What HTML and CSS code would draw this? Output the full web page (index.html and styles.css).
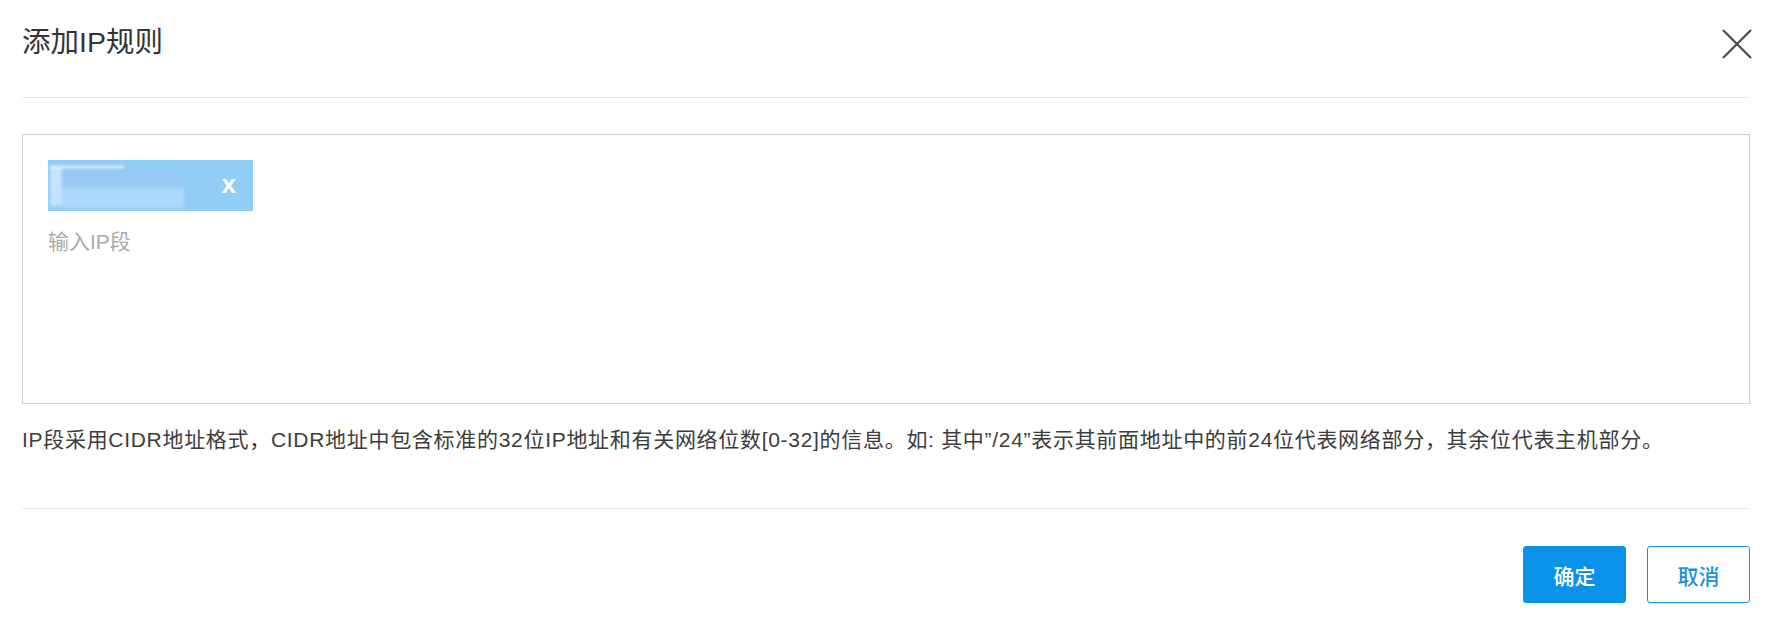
FILE: index.html
```html
<!DOCTYPE html>
<html lang="zh-CN">
<head>
<meta charset="utf-8">
<title>添加IP规则</title>
<link rel="stylesheet" href="styles.css">
</head>
<body>
<div class="dialog">
  <div class="dialog-header">
    <h1 class="dialog-title">添加IP规则</h1>
    <button class="close-btn" aria-label="关闭">
      <svg width="30" height="30" viewBox="0 0 30 30"><path d="M1 1 L29 29 M29 1 L1 29" stroke="#4a4a4a" stroke-width="2.2" fill="none"/></svg>
    </button>
  </div>
  <div class="dialog-body">
    <div class="ip-input">
      <div class="tag">
        <div class="tag-blur">
          <span class="blur-line"></span>
          <span class="blur-col"></span>
          <span class="blur-top"></span>
          <span class="blur-bottom"></span>
        </div>
        <span class="tag-x">x</span>
      </div>
      <div class="placeholder">输入IP段</div>
    </div>
    <p class="hint">IP段采用CIDR地址格式，CIDR地址中包含标准的32位IP地址和有关网络位数[0-32]的信息。如: 其中”/24”表示其前面地址中的前24位代表网络部分，其余位代表主机部分。</p>
  </div>
  <div class="dialog-footer">
    <button class="btn btn-primary">确定</button>
    <button class="btn btn-default">取消</button>
  </div>
</div>
</body>
</html>
```

FILE: styles.css
```css
* { box-sizing: border-box; }
html, body { margin: 0; padding: 0; background: #fff; }
body {
  font-family: "Liberation Sans", "Noto Sans CJK SC", sans-serif;
  color: #333;
}
.dialog {
  width: 1768px;
  padding: 0 18px 0 22px;
}
.dialog-header {
  height: 98px;
  border-bottom: 1px solid #e8e8e8;
  display: flex;
  align-items: flex-start;
  justify-content: space-between;
}
.dialog-title {
  margin: 0;
  padding-top: 22px;
  font-size: 28.5px;
  font-weight: normal;
  line-height: 40px;
  color: #333;
}
.close-btn {
  margin-top: 29px;
  margin-right: -2px;
  padding: 0;
  border: none;
  background: none;
  width: 30px;
  height: 30px;
  display: block;
}
.close-btn svg { display: block; }
.dialog-body {
  padding-top: 36px;
}
.ip-input {
  height: 270px;
  border: 1px solid #cfcfcf;
  padding: 25px 25px;
}
.tag {
  position: relative;
  width: 205px;
  height: 51px;
  background: #92cdf8;
  display: flex;
  align-items: center;
  justify-content: flex-end;
  padding-right: 17px;
}
.tag-blur {
  position: absolute;
  left: 2px;
  top: 6px;
  width: 136px;
  height: 44px;
  filter: blur(1.5px);
}
.blur-line {
  position: absolute;
  left: 0; top: 0;
  width: 74px; height: 2px;
  background: #f4faff;
}
.blur-col {
  position: absolute;
  left: 0; top: 2px;
  width: 12px; height: 38px;
  background: #c4e2fb;
}
.blur-top {
  position: absolute;
  left: 12px; top: 4px;
  width: 122px; height: 18px;
  background: #96c9f4;
}
.blur-bottom {
  position: absolute;
  left: 12px; top: 22px;
  width: 122px; height: 20px;
  background: #acd7f9;
}
.tag-x {
  position: relative;
  color: #fff;
  font-family: "Liberation Sans", sans-serif;
  font-size: 26px;
  font-weight: bold;
  line-height: 1;
  margin-top: -4px;
}
.placeholder {
  margin-top: 16px;
  font-size: 21px;
  line-height: 30px;
  color: #aaa;
}
.hint {
  margin: 0;
  padding-top: 21px;
  height: 105px;
  font-size: 21px;
  letter-spacing: 0.7px;
  line-height: 30px;
  color: #3c3c3c;
  border-bottom: 1px solid #e8e8e8;
  white-space: nowrap;
}
.dialog-footer {
  padding-top: 37px;
  display: flex;
  justify-content: flex-end;
  gap: 21px;
}
.btn {
  width: 103px;
  height: 57px;
  border-radius: 3px;
  font-family: "Liberation Sans", "Noto Sans CJK SC", sans-serif;
  font-size: 21px;
  font-weight: 500;
  padding: 0;
  cursor: pointer;
}
.btn-primary {
  background: #0a91ea;
  border: 1px solid #0a91ea;
  color: #fff;
}
.btn-default {
  background: #fff;
  border: 1px solid #1a8fe3;
  color: #1a8fe3;
}
```
